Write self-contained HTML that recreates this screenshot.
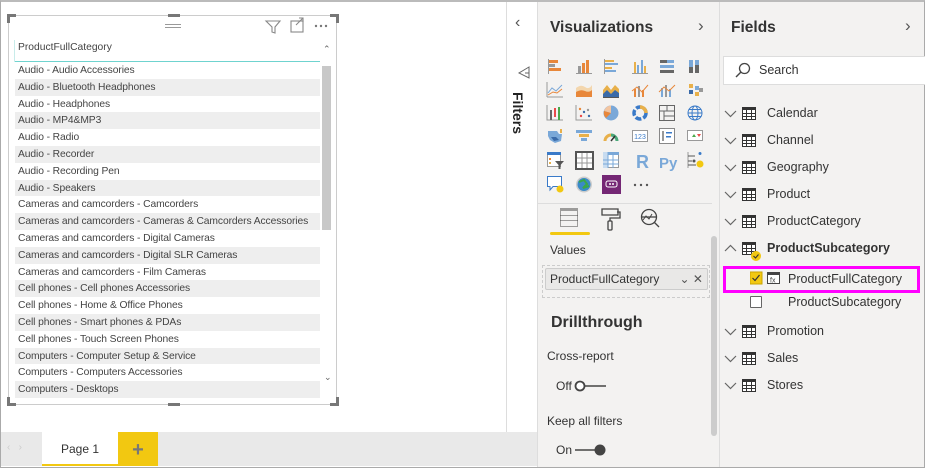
<!DOCTYPE html>
<html><head><meta charset="utf-8"><style>
*{margin:0;padding:0;box-sizing:border-box}
body{width:925px;height:468px;overflow:hidden;font-family:"Segoe UI","Liberation Sans",sans-serif;background:#fff;position:relative;color:#333}
.a{position:absolute}
.row{position:absolute;left:15px;width:305px;height:16.8px;font-size:10.3px;line-height:17.5px;padding-left:3px;color:#444;white-space:nowrap;letter-spacing:-0.1px}
.row.s{background:#eeeeee}
.fld{position:absolute;left:722px;font-size:12.5px;color:#333;height:20px;line-height:20px;width:200px}
.fld .ch{position:absolute;left:2px;top:0}
.fld .tb{position:absolute;left:20px;top:4px}
.fld .t{position:absolute;left:45px;top:0}
</style></head><body>
<div class="a" style="left:0;top:0;width:925px;height:468px;border:1px solid #aaa;border-top:2px solid #bbb"></div>

<div class="a" style="left:8px;top:15px;width:329px;height:390px;border:1px solid #ccc"></div>
<svg class="a" style="left:5px;top:12px" width="336" height="396">
<g fill="#777">
<rect x="2" y="2" width="9" height="3"/><rect x="2" y="2" width="3" height="9"/>
<rect x="325" y="2" width="9" height="3"/><rect x="331" y="2" width="3" height="9"/>
<rect x="2" y="391" width="9" height="3"/><rect x="2" y="385" width="3" height="9"/>
<rect x="325" y="391" width="9" height="3"/><rect x="331" y="385" width="3" height="9"/>
<rect x="163" y="2" width="12" height="3"/><rect x="163" y="391" width="12" height="3"/>
</g>
<g stroke="#999" stroke-width="1"><line x1="160" y1="12.5" x2="176" y2="12.5"/><line x1="160" y1="15.5" x2="176" y2="15.5"/></g>
<g stroke="#888" stroke-width="1.1" fill="none">
<path d="M261 9 L275 9 L270 15 L270 21 L267 20 L267 15 Z"/>
<rect x="286" y="9" width="12" height="11"/><path d="M291 13 L298 6 M294 6 L298 6 L298 10"/>
</g>
<g fill="#777"><circle cx="311" cy="14" r="1.2"/><circle cx="316" cy="14" r="1.2"/><circle cx="321" cy="14" r="1.2"/></g>
</svg>
<div class="a" style="left:18px;top:42px;font-size:10.3px;color:#444">ProductFullCategory</div>
<div class="a" style="left:14px;top:61px;width:306px;height:1px;background:#6fd3cf"></div>
<div class="a" style="left:14px;top:40px;width:1px;height:22px;background:#c8ecea"></div>
<div class="a" style="left:323px;top:44px;font-size:9px;color:#666">&#8963;</div>
<div class="a" style="left:322px;top:66px;width:9px;height:164px;background:#c8c8c8"></div>
<div class="a" style="left:324px;top:372px;font-size:9px;color:#666">&#8964;</div>

<div class="row" style="top:62px">Audio - Audio Accessories</div>
<div class="row s" style="top:78.8px">Audio - Bluetooth Headphones</div>
<div class="row" style="top:95.6px">Audio - Headphones</div>
<div class="row s" style="top:112.4px">Audio - MP4&amp;MP3</div>
<div class="row" style="top:129.2px">Audio - Radio</div>
<div class="row s" style="top:146px">Audio - Recorder</div>
<div class="row" style="top:162.8px">Audio - Recording Pen</div>
<div class="row s" style="top:179.6px">Audio - Speakers</div>
<div class="row" style="top:196.4px">Cameras and camcorders - Camcorders</div>
<div class="row s" style="top:213.2px">Cameras and camcorders - Cameras &amp; Camcorders Accessories</div>
<div class="row" style="top:230px">Cameras and camcorders - Digital Cameras</div>
<div class="row s" style="top:246.8px">Cameras and camcorders - Digital SLR Cameras</div>
<div class="row" style="top:263.6px">Cameras and camcorders - Film Cameras</div>
<div class="row s" style="top:280.4px">Cell phones - Cell phones Accessories</div>
<div class="row" style="top:297.2px">Cell phones - Home &amp; Office Phones</div>
<div class="row s" style="top:314px">Cell phones - Smart phones &amp; PDAs</div>
<div class="row" style="top:330.8px">Cell phones - Touch Screen Phones</div>
<div class="row s" style="top:347.6px">Computers - Computer Setup &amp; Service</div>
<div class="row" style="top:364.4px">Computers - Computers Accessories</div>
<div class="row s" style="top:381.2px">Computers - Desktops</div>

<div class="a" style="left:1px;top:432px;width:536px;height:34px;background:#e9e9e9"></div>
<div class="a" style="left:7px;top:442px;font-size:10px;color:#ccc">&#8249;&nbsp;&nbsp;&nbsp;&#8250;</div>
<div class="a" style="left:42px;top:432px;width:76px;height:34px;background:#fff;border-bottom:2px solid #f2c811;font-size:12px;line-height:34px;text-align:center;color:#333">Page 1</div>
<div class="a" style="left:118px;top:432px;width:40px;height:34px;background:#f2c811;font-size:20px;font-weight:bold;line-height:36px;text-align:center;color:#777">+</div>

<div class="a" style="left:506px;top:2px;width:1px;height:430px;background:#ddd"></div>
<div class="a" style="left:515px;top:14px;font-size:16px;color:#555">&#8249;</div>
<svg class="a" style="left:517px;top:66px" width="14" height="14"><path d="M12 1 L2 7 L12 12 Z M8 7 L12 7" stroke="#666" fill="none" stroke-width="1"/></svg>
<div class="a" style="left:510px;top:92px;font-size:14px;font-weight:600;color:#222;writing-mode:vertical-rl">Filters</div>

<div class="a" style="left:537px;top:2px;width:183px;height:465px;background:#f3f2f1;border-left:1px solid #ddd"></div>
<div class="a" style="left:550px;top:19px;font-size:15.5px;font-weight:600;color:#333">Visualizations</div>
<div class="a" style="left:698px;top:16px;font-size:17px;color:#555">&#8250;</div>
<svg class="a" style="left:545px;top:56px" width="170" height="140">
<g transform="translate(2,2)"><rect x="1" y="1" width="1" height="15" fill="#999"/><rect x="2" y="2" width="9" height="3" fill="#e8873a"/><rect x="2" y="6" width="6" height="3" fill="#999"/><rect x="2" y="10" width="12" height="3" fill="#e8873a"/></g>
<g transform="translate(31,2)"><rect x="0" y="15" width="16" height="1" fill="#999"/><rect x="2" y="8" width="3" height="7" fill="#999"/><rect x="6" y="5" width="3" height="10" fill="#e8873a"/><rect x="10" y="2" width="3" height="13" fill="#e8873a"/></g>
<g transform="translate(58,2)"><rect x="1" y="1" width="1" height="15" fill="#999"/><rect x="2" y="2" width="9" height="2" fill="#e8b04a"/><rect x="2" y="5" width="13" height="2" fill="#7aa8d8"/><rect x="2" y="9" width="7" height="2" fill="#e8b04a"/><rect x="2" y="12" width="11" height="2" fill="#7aa8d8"/></g>
<g transform="translate(87,2)"><rect x="0" y="15" width="16" height="1" fill="#999"/><rect x="2" y="4" width="2" height="11" fill="#e8b04a"/><rect x="5" y="7" width="2" height="8" fill="#7aa8d8"/><rect x="9" y="2" width="2" height="13" fill="#7aa8d8"/><rect x="12" y="8" width="2" height="7" fill="#e8b04a"/></g>
<g transform="translate(114,2)"><rect x="1" y="2" width="14" height="3" fill="#666"/><rect x="1" y="7" width="14" height="3" fill="#7aa8d8"/><rect x="1" y="12" width="14" height="3" fill="#666"/><rect x="8" y="2" width="7" height="3" fill="#7aa8d8"/></g>
<g transform="translate(142,2)"><rect x="2" y="2" width="4" height="13" fill="#7aa8d8"/><rect x="8" y="2" width="4" height="13" fill="#7aa8d8"/><rect x="2" y="9" width="4" height="6" fill="#666"/><rect x="8" y="7" width="4" height="8" fill="#666"/></g>
<g transform="translate(2,26)" fill="none"><path d="M0 15 H16 M0 0 V15" stroke="#999"/><path d="M1 11 L5 6 L9 9 L15 3" stroke="#7aa8d8"/><path d="M1 13 L6 10 L10 11 L15 7" stroke="#e8873a"/></g>
<g transform="translate(31,26)"><path d="M0 6 Q5 2 9 5 T16 3 V15 H0Z" fill="#f3d6ad"/><path d="M0 10 Q5 7 9 9 T16 8 V15 H0Z" fill="#e8873a"/></g>
<g transform="translate(58,26)"><path d="M0 8 L4 3 L8 8 L12 3 L16 7 V15 H0Z" fill="#e8b04a"/><path d="M0 12 L4 8 L8 12 L12 8 L16 11 V15 H0Z" fill="#3a6aa8"/><rect x="0" y="15" width="16" height="1" fill="#555"/></g>
<g transform="translate(87,26)"><rect x="2" y="7" width="2" height="8" fill="#e8873a"/><rect x="6" y="4" width="2" height="11" fill="#999"/><rect x="10" y="8" width="2" height="7" fill="#e8873a"/><path d="M0 9 L5 5 L10 10 L16 3" stroke="#e8873a" fill="none"/></g>
<g transform="translate(114,26)"><rect x="2" y="6" width="2" height="9" fill="#7aa8d8"/><rect x="6" y="3" width="2" height="12" fill="#999"/><rect x="10" y="7" width="2" height="8" fill="#7aa8d8"/><path d="M0 10 L5 5 L10 9 L16 3" stroke="#e8873a" fill="none"/></g>
<g transform="translate(142,26)"><rect x="2" y="2" width="4" height="4" fill="#e8b04a"/><rect x="8" y="4" width="4" height="4" fill="#7aa8d8"/><rect x="2" y="8" width="4" height="4" fill="#3a6aa8"/><rect x="8" y="10" width="4" height="4" fill="#e8b04a"/><rect x="12" y="6" width="4" height="4" fill="#999"/></g>
<g transform="translate(2,49)"><path d="M0 0 V15 H16" stroke="#999" fill="none"/><rect x="3" y="5" width="2" height="10" fill="#666"/><rect x="7" y="3" width="2" height="9" fill="#e84a4a"/><rect x="11" y="2" width="2" height="13" fill="#4aa84a"/></g>
<g transform="translate(31,49)"><path d="M0 0 V15 H16" stroke="#999" fill="none"/><circle cx="4" cy="4" r="1.2" fill="#e8873a"/><circle cx="8" cy="7" r="1.2" fill="#3a6aa8"/><circle cx="12" cy="5" r="1.2" fill="#999"/><circle cx="5" cy="11" r="1.2" fill="#e84a4a"/><circle cx="13" cy="11" r="1.2" fill="#3a6aa8"/></g>
<g transform="translate(58,49)"><circle cx="8" cy="8" r="7.5" fill="#7aa8d8"/><path d="M8 8 L8 0.5 A7.5 7.5 0 0 0 1 6 Z" fill="#f3c5a0"/><path d="M8 8 L1 6 A7.5 7.5 0 0 0 3 13 Z" fill="#e8873a"/></g>
<g transform="translate(87,49)"><circle cx="8" cy="8" r="6" fill="none" stroke="#3a7ac8" stroke-width="3.5" stroke-dasharray="6 2"/><path d="M8 2 A6 6 0 0 1 14 8" stroke="#e8b04a" stroke-width="3.5" fill="none"/></g>
<g transform="translate(114,49)" fill="none" stroke="#666"><rect x="0.5" y="0.5" width="15" height="15"/><path d="M0.5 6 H15.5 M8 0.5 V6 M5 6 V15.5 M5 11 H15.5"/></g>
<g transform="translate(142,49)" fill="none" stroke="#3a7ac8"><circle cx="8" cy="8" r="7"/><ellipse cx="8" cy="8" rx="3" ry="7"/><path d="M1 8 H15 M2 4.5 H14 M2 11.5 H14"/></g>
<g transform="translate(2,72)"><path d="M1 3 H10 L12 6 L15 6 L14 13 L8 15 L3 12 L1 8Z" fill="#7aa8d8"/><path d="M4 9 L9 9 L12 12 L7 13Z" fill="#3a6aa8"/><rect x="13" y="1" width="2" height="4" fill="#e8b04a"/></g>
<g transform="translate(31,72)"><rect x="0" y="2" width="16" height="3" fill="#7aa8d8"/><rect x="3" y="6" width="10" height="3" fill="#e8b04a"/><rect x="5" y="10" width="6" height="3" fill="#7aa8d8"/></g>
<g transform="translate(58,72)" fill="none" stroke-width="3"><path d="M2 13 A6 6 0 0 1 8 7" stroke="#e8b04a"/><path d="M8 7 A6 6 0 0 1 14 13" stroke="#4aa87a"/><path d="M8 13 L12 8" stroke="#333" stroke-width="1.5"/></g>
<g transform="translate(87,72)"><rect x="0.5" y="2.5" width="15" height="11" fill="#fff" stroke="#999"/><text x="8" y="11" font-size="7" text-anchor="middle" fill="#3a7ac8" font-family="Liberation Sans">123</text></g>
<g transform="translate(114,72)"><rect x="0.5" y="0.5" width="15" height="15" fill="#fff" stroke="#888"/><rect x="3" y="3" width="2" height="10" fill="#999"/><rect x="7" y="4" width="6" height="1.5" fill="#3a7ac8"/><rect x="7" y="8" width="5" height="1.5" fill="#3a7ac8"/></g>
<g transform="translate(142,72)"><rect x="0.5" y="2.5" width="15" height="10" fill="#fff" stroke="#999"/><path d="M5 9 L7 6 L9 9Z" fill="#4aa84a"/><path d="M10 6 L14 6 L12 9Z" fill="#e84a4a"/></g>
<g transform="translate(2,96)"><rect x="0.5" y="0.5" width="13" height="14" fill="#fff" stroke="#999"/><rect x="0" y="0" width="14" height="3" fill="#3a7ac8"/><rect x="2" y="6" width="2" height="2" fill="#e8873a"/><rect x="2" y="10" width="2" height="2" fill="#e8b04a"/><path d="M8 9 H17 L13.5 13 V17 H11.5 V13Z" fill="#555"/></g>
<g transform="translate(30,95)"><rect x="0" y="0" width="19" height="19" fill="#555"/><rect x="2" y="2" width="15" height="15" fill="#fff"/><path d="M2 7 H17 M2 12 H17 M7 2 V17 M12 2 V17" stroke="#999"/></g>
<g transform="translate(58,96)"><rect x="0.5" y="0.5" width="15" height="15" fill="#fff" stroke="#999"/><rect x="0" y="0" width="16" height="3" fill="#7aa8d8"/><rect x="0" y="0" width="5" height="16" fill="#c8dcf0"/><path d="M0 8 H16 M0 12 H16 M5 0 V16 M10 0 V16" stroke="#7aa8d8"/></g>
<text x="91" y="112" font-size="18" font-weight="bold" fill="#7aa8d8" font-family="Liberation Sans">R</text>
<text x="114" y="112" font-size="15" font-weight="bold" fill="#7aa8d8" font-family="Liberation Sans">Py</text>
<g transform="translate(142,96)"><path d="M1 0 V16" stroke="#999"/><path d="M1 4 H8 M1 9 H5 M1 13 H9" stroke="#555"/><circle cx="13" cy="1.5" r="1.5" fill="#3a7ac8"/><circle cx="7" cy="9" r="1.5" fill="#555"/><circle cx="13" cy="12" r="3.5" fill="#f2c811"/></g>
<g transform="translate(2,120)"><path d="M0.5 0.5 H14.5 V10.5 H6 L3 14 V10.5 H0.5Z" fill="#fff" stroke="#3a7ac8"/><circle cx="13" cy="13" r="3.5" fill="#f2c811"/></g>
<g transform="translate(30,120)"><circle cx="9" cy="8.5" r="8" fill="#ccc"/><circle cx="9" cy="8.5" r="6.5" fill="#3a8ac8"/><path d="M4 6 L9 4 L12 8 L8 12 L14 10" stroke="#3aa84a" stroke-width="2" fill="none"/></g>
<g transform="translate(57,119)"><rect x="0" y="0" width="19" height="19" fill="#742774"/><rect x="4" y="6" width="11" height="6" rx="2" fill="none" stroke="#fff"/><circle cx="8" cy="9" r="1" fill="#fff"/><circle cx="11" cy="9" r="1" fill="#fff"/></g>
<g fill="#555"><circle cx="90" cy="129" r="1.2"/><circle cx="96" cy="129" r="1.2"/><circle cx="102" cy="129" r="1.2"/></g>
</svg>
<div class="a" style="left:538px;top:203px;width:174px;height:1px;background:#ddd"></div>
<svg class="a" style="left:555px;top:206px" width="120" height="30">
<g fill="none" stroke="#444"><rect x="5.5" y="4.5" width="17" height="16" stroke-dasharray="1 1"/><path d="M5.5 9.5 H22.5 M5.5 14.5 H22.5" stroke-dasharray="1 1"/><path d="M5 3 H23"/></g>
<g fill="none" stroke="#444" stroke-width="1.3"><path d="M47 3 H63 V9 H47Z M62 6 H65 V12 H55 V15"/><rect x="53" y="15" width="4" height="9" rx="1"/></g>
<g fill="none" stroke="#444" stroke-width="1.3"><circle cx="94" cy="11" r="7.5"/><path d="M99.5 16.5 L104 21"/><path d="M88 14 L91 10 L94 13 L97 8" stroke-width="1"/><path d="M87 11 H101"/></g>
</svg>
<div class="a" style="left:550px;top:232px;width:40px;height:3px;background:#f2c811;border-radius:2px"></div>
<div class="a" style="left:711px;top:236px;width:6px;height:200px;background:#ccc;border-radius:3px"></div>
<div class="a" style="left:550px;top:243px;font-size:12px;color:#333">Values</div>
<div class="a" style="left:542px;top:265px;width:168px;height:33px;border:1px dashed #ccc"></div>
<div class="a" style="left:545px;top:268px;width:163px;height:22px;background:#e9e8e7;border:1px solid #ccc;border-radius:2px;font-size:12px;line-height:20px;padding-left:4px;color:#333">ProductFullCategory<span style="position:absolute;right:4px;top:0;color:#555">&#8964; &#10005;</span></div>
<div class="a" style="left:551px;top:314px;font-size:16px;font-weight:600;color:#333">Drillthrough</div>
<div class="a" style="left:547px;top:349px;font-size:12px;color:#333">Cross-report</div>
<div class="a" style="left:556px;top:379px;font-size:12px;color:#333">Off</div>
<svg class="a" style="left:574px;top:379px" width="36" height="14"><circle cx="6" cy="7" r="4.5" fill="#fff" stroke="#444" stroke-width="1.8"/><path d="M11 7 H32" stroke="#444" stroke-width="1.5"/></svg>
<div class="a" style="left:547px;top:414px;font-size:12px;color:#333">Keep all filters</div>
<div class="a" style="left:556px;top:443px;font-size:12px;color:#333">On</div>
<svg class="a" style="left:575px;top:443px" width="36" height="14"><path d="M0 7 H20" stroke="#444" stroke-width="1.5"/><circle cx="25" cy="7" r="5.5" fill="#444"/></svg>

<div class="a" style="left:719px;top:2px;width:205px;height:465px;background:#f3f2f1;border-left:1px solid #ddd"></div>
<div class="a" style="left:731px;top:19px;font-size:15.5px;font-weight:600;color:#333">Fields</div>
<div class="a" style="left:905px;top:16px;font-size:17px;color:#555">&#8250;</div>
<div class="a" style="left:723px;top:56px;width:202px;height:29px;background:#fff;border:1px solid #ddd;border-right:none"></div>
<svg class="a" style="left:734px;top:62px" width="18" height="18"><circle cx="10.5" cy="6.5" r="5" fill="none" stroke="#444" stroke-width="1.3"/><path d="M7 10 L2 15" stroke="#444" stroke-width="1.4"/></svg>
<div class="a" style="left:759px;top:63px;font-size:12.5px;color:#333">Search</div>

<svg width="0" height="0" style="position:absolute"><defs>
<g id="tbl"><rect x="0.5" y="0.5" width="13" height="12" fill="#fff" stroke="#333"/><rect x="0" y="0" width="14" height="3" fill="#333"/><path d="M0 6.5 H14 M0 9.5 H14 M4.5 3 V13 M9.5 3 V13" stroke="#333"/></g>
<path id="chd" d="M1 3 L6.5 8.5 L12 3" fill="none" stroke="#666" stroke-width="1.2"/>
</defs></svg>

<div class="fld" style="top:103px"><svg class="ch" style="top:5px" width="14" height="12"><use href="#chd"/></svg><svg class="tb" width="14" height="13"><use href="#tbl"/></svg><span class="t">Calendar</span></div>
<div class="fld" style="top:130px"><svg class="ch" style="top:5px" width="14" height="12"><use href="#chd"/></svg><svg class="tb" width="14" height="13"><use href="#tbl"/></svg><span class="t">Channel</span></div>
<div class="fld" style="top:157px"><svg class="ch" style="top:5px" width="14" height="12"><use href="#chd"/></svg><svg class="tb" width="14" height="13"><use href="#tbl"/></svg><span class="t">Geography</span></div>
<div class="fld" style="top:184px"><svg class="ch" style="top:5px" width="14" height="12"><use href="#chd"/></svg><svg class="tb" width="14" height="13"><use href="#tbl"/></svg><span class="t">Product</span></div>
<div class="fld" style="top:211px"><svg class="ch" style="top:5px" width="14" height="12"><use href="#chd"/></svg><svg class="tb" width="14" height="13"><use href="#tbl"/></svg><span class="t">ProductCategory</span></div>
<div class="fld" style="top:238px"><svg class="ch" style="top:4px" width="14" height="12"><path d="M1 9 L6.5 3.5 L12 9" fill="none" stroke="#666" stroke-width="1.2"/></svg><svg class="tb" width="20" height="20"><use href="#tbl"/><circle cx="14" cy="14" r="5" fill="#f2c811"/><path d="M11.5 14 L13.5 16 L16.5 12.5" stroke="#333" fill="none" stroke-width="1.1"/></svg><span class="t" style="font-weight:bold">ProductSubcategory</span></div>
<div class="a" style="left:723px;top:266px;width:197px;height:27px;border:3px solid #f0f"></div>
<svg class="a" style="left:750px;top:271px" width="32" height="16"><rect x="0" y="1" width="12" height="12" fill="#f2c811" stroke="#c9a400"/><path d="M2.5 7 L5 9.5 L9.5 4" stroke="#333" fill="none" stroke-width="1.2"/><rect x="17.5" y="1.5" width="12" height="11" fill="#fff" stroke="#444"/><rect x="17" y="1" width="13" height="3" fill="#444"/><text x="20" y="11.5" font-size="7" fill="#444" font-family="Liberation Sans">fx</text></svg>
<div class="a" style="left:788px;top:272px;font-size:12.5px;color:#333">ProductFullCategory</div>
<div class="a" style="left:750px;top:296px;width:12px;height:12px;border:1px solid #666;background:#fff;border-radius:1px"></div>
<div class="a" style="left:788px;top:295px;font-size:12.5px;color:#333">ProductSubcategory</div>
<div class="fld" style="top:321px"><svg class="ch" style="top:5px" width="14" height="12"><use href="#chd"/></svg><svg class="tb" width="14" height="13"><use href="#tbl"/></svg><span class="t">Promotion</span></div>
<div class="fld" style="top:348px"><svg class="ch" style="top:5px" width="14" height="12"><use href="#chd"/></svg><svg class="tb" width="14" height="13"><use href="#tbl"/></svg><span class="t">Sales</span></div>
<div class="fld" style="top:375px"><svg class="ch" style="top:5px" width="14" height="12"><use href="#chd"/></svg><svg class="tb" width="14" height="13"><use href="#tbl"/></svg><span class="t">Stores</span></div>
</body></html>
